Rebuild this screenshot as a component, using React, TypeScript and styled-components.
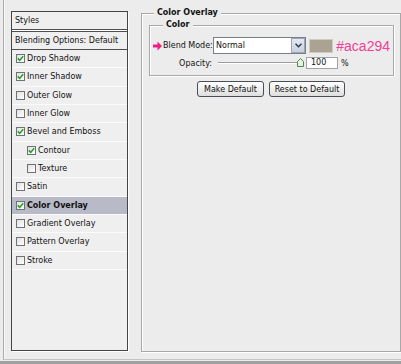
import React from "react";
import styled, { createGlobalStyle } from "styled-components";

const GlobalStyle = createGlobalStyle`
  html, body {
    margin: 0;
    padding: 0;
    background: #ececec;
  }
  body {
    font-family: "DejaVu Sans", Verdana, sans-serif;
    color: #111;
  }
`;

interface IStyleItem {
  label: string;
  checked: boolean;
  indent?: boolean;
  selected?: boolean;
}

const styleItems: IStyleItem[] = [
  { label: "Drop Shadow", checked: true },
  { label: "Inner Shadow", checked: true },
  { label: "Outer Glow", checked: false },
  { label: "Inner Glow", checked: false },
  { label: "Bevel and Emboss", checked: true },
  { label: "Contour", checked: true, indent: true },
  { label: "Texture", checked: false, indent: true },
  { label: "Satin", checked: false },
  { label: "Color Overlay", checked: true, selected: true },
  { label: "Gradient Overlay", checked: false },
  { label: "Pattern Overlay", checked: false },
  { label: "Stroke", checked: false },
];

const CheckBox = ({ checked }: { checked: boolean }) => (
  <Box>
    {checked && (
      <svg width="7" height="7" viewBox="0 0 7 7">
        <path d="M0.8 3.4 L2.7 5.4 L6.2 1.2" fill="none" stroke="#23a02a" strokeWidth="1.6" />
      </svg>
    )}
  </Box>
);

const PinkArrow = () => (
  <svg width="9" height="10" viewBox="0 0 9 10">
    <path d="M0 3.5 H4.5 V0.5 L9 5 L4.5 9.5 V6.5 H0 Z" fill="#ec1e86" />
  </svg>
);

const SliderThumb = () => (
  <svg width="7" height="9" viewBox="0 0 7 9">
    <path d="M0.5 8.5 V3.5 L3.5 0.5 L6.5 3.5 V8.5 Z" fill="#e4f3df" stroke="#4f8a4f" strokeWidth="1" />
  </svg>
);

const Chevron = () => (
  <svg width="7" height="5" viewBox="0 0 7 5">
    <path d="M0.5 0.8 L3.5 3.8 L6.5 0.8" fill="none" stroke="#2c3a55" strokeWidth="1.5" />
  </svg>
);

const App: React.FC = () => {
  const opacity = 100;
  return (
    <Page>
      <GlobalStyle />
      <Frame>
        <StylesBox>
          <HeaderRow>Styles</HeaderRow>
          <BlendRow>Blending Options: Default</BlendRow>
          {styleItems.map((item) => (
            <ItemRow key={item.label} $indent={item.indent} $selected={item.selected}>
              <CheckBox checked={item.checked} />
              <span>{item.label}</span>
            </ItemRow>
          ))}
        </StylesBox>

        <OuterGroup>
          <Legend $shift={5}>Color Overlay</Legend>
          <InnerGroup>
            <Legend $shift={10}>Color</Legend>
            <FieldRow>
              <ArrowCell>
                <PinkArrow />
              </ArrowCell>
              <Label>Blend Mode:</Label>
              <Select>
                <span>Normal</span>
                <DropButton>
                  <Chevron />
                </DropButton>
              </Select>
              <Swatch $color="#aca294" />
              <HexText>#aca294</HexText>
            </FieldRow>
            <FieldRow $top={3}>
              <ArrowCell />
              <Label>Opacity:</Label>
              <Slider>
                <Track />
                <Thumb style={{ left: `${(opacity / 100) * 79}px` }}>
                  <SliderThumb />
                </Thumb>
              </Slider>
              <NumberBox>{opacity}</NumberBox>
              <Unit>%</Unit>
            </FieldRow>
          </InnerGroup>
          <ButtonRow>
            <Button $w={67}>Make Default</Button>
            <Button $w={76}>Reset to Default</Button>
          </ButtonRow>
        </OuterGroup>
      </Frame>
      <BottomBar />
    </Page>
  );
};

const Page = styled.div`
  width: 401px;
  height: 364px;
  display: flex;
  flex-direction: column;
  overflow: hidden;
  background: #ececec;
  font-size: 8px;
`;

const Frame = styled.div`
  height: 360px;
  box-sizing: border-box;
  margin-left: 3px;
  border-left: 1px solid #acacac;
  border-bottom: 1px solid #c4c4c4;
  box-shadow: inset 1px 0 0 #f8f8f8;
  padding: 8px 0 0 7px;
  display: flex;
  gap: 13px;
  align-items: flex-start;
`;

const BottomBar = styled.div`
  height: 3px;
  margin-top: 1px;
  background: #a0a0a0;
`;

const StylesBox = styled.div`
  margin-top: 3px;
  width: 117px;
  height: 340px;
  box-sizing: border-box;
  border: 1px solid #454545;
  background: #efefef;
  box-shadow: 1px 1px 0 #fff;
  display: flex;
  flex-direction: column;
`;

const HeaderRow = styled.div`
  height: 17px;
  display: flex;
  align-items: center;
  padding-left: 3px;
  border-bottom: 1px solid #4e4e4e;
  margin-bottom: 1px;
  box-shadow: 0 1px 0 #fff;
`;

const BlendRow = styled.div`
  height: 17px;
  display: flex;
  align-items: center;
  padding-left: 3px;
  border-top: 1px solid #4e4e4e;
  border-bottom: 1px solid #4e4e4e;
  white-space: nowrap;
`;

const ItemRow = styled.div<{ $indent?: boolean; $selected?: boolean }>`
  height: 18.33px;
  box-sizing: border-box;
  display: flex;
  align-items: center;
  gap: 2px;
  padding-left: ${(p) => (p.$indent ? 15 : 4)}px;
  border-bottom: 1px solid #fbfbfb;
  background: ${(p) => (p.$selected ? "#b8bac7" : "transparent")};
  font-weight: ${(p) => (p.$selected ? "bold" : "normal")};
  white-space: nowrap;
`;

const Box = styled.div`
  width: 9px;
  height: 9px;
  box-sizing: border-box;
  border: 1px solid #6e7276;
  background: linear-gradient(135deg, #e0e0e0, #ffffff);
  display: flex;
  align-items: center;
  justify-content: center;
`;

const OuterGroup = styled.fieldset`
  margin: 0;
  min-width: 0;
  width: 260px;
  height: 344px;
  box-sizing: border-box;
  padding: 2px 7px 0 7px;
  border: 1px solid #a8a8a8;
  box-shadow: inset 1px 1px 0 #fff, 1px 1px 0 #fff;
`;

const InnerGroup = styled.fieldset`
  margin: 0;
  min-width: 0;
  width: 245px;
  box-sizing: border-box;
  padding: 7px 3px 6px 3px;
  border: 1px solid #a8a8a8;
  box-shadow: inset 1px 1px 0 #fff, 1px 1px 0 #fff;
`;

const Legend = styled.legend<{ $shift: number }>`
  margin-left: ${(p) => p.$shift}px;
  padding: 0 3px;
  font-weight: bold;
  line-height: 10px;
  background: #ececec;
`;

const FieldRow = styled.div<{ $top?: number }>`
  display: flex;
  align-items: center;
  margin-top: ${(p) => p.$top ?? 0}px;
`;

const ArrowCell = styled.div`
  width: 10px;
  height: 10px;
  display: flex;
  flex-shrink: 0;
`;

const Label = styled.div`
  width: 49px;
  flex-shrink: 0;
  text-align: right;
  white-space: nowrap;
`;

const Select = styled.div`
  margin-left: 1px;
  width: 96px;
  height: 17px;
  box-sizing: border-box;
  border: 1px solid #7a7e86;
  background: #fff;
  display: flex;
  align-items: center;
  justify-content: space-between;
  padding-left: 2px;
`;

const DropButton = styled.div`
  width: 14px;
  height: 15px;
  box-sizing: border-box;
  border: 1px solid #9aa6bd;
  background: linear-gradient(#e4e8f0, #c9d0de);
  display: flex;
  align-items: center;
  justify-content: center;
`;

const Swatch = styled.div<{ $color: string }>`
  margin-left: 3px;
  width: 25px;
  height: 14px;
  background: ${(p) => p.$color};
  border: 1px solid #cfcac2;
  box-sizing: border-box;
`;

const HexText = styled.div`
  margin-left: 3px;
  font-family: "Liberation Sans", Arial, sans-serif;
  font-size: 14px;
  color: #f23f98;
  line-height: 14px;
`;

const Slider = styled.div`
  position: relative;
  margin-left: 6px;
  width: 85px;
  height: 12px;
  margin-right: 3px;
`;

const Track = styled.div`
  position: absolute;
  left: 0;
  right: 4px;
  top: 5px;
  border-top: 1px solid #9c9c9c;
  border-bottom: 1px solid #fff;
`;

const Thumb = styled.div`
  position: absolute;
  top: 1px;
  display: flex;
`;

const NumberBox = styled.div`
  width: 32px;
  height: 12px;
  box-sizing: border-box;
  border: 1px solid #a2a2a2;
  background: #fff;
  padding-left: 4px;
  line-height: 10px;
`;

const Unit = styled.div`
  margin-left: 3px;
`;

const ButtonRow = styled.div`
  display: flex;
  justify-content: center;
  gap: 5px;
  margin-top: 5px;
`;

const Button = styled.button<{ $w: number }>`
  width: ${(p) => p.$w}px;
  height: 16px;
  padding: 0;
  border: 1px solid #4a4d55;
  border-radius: 3px;
  background: linear-gradient(#ffffff, #dedede);
  font-family: "DejaVu Sans", Verdana, sans-serif;
  font-size: 8px;
  color: #111;
`;

export default App;
